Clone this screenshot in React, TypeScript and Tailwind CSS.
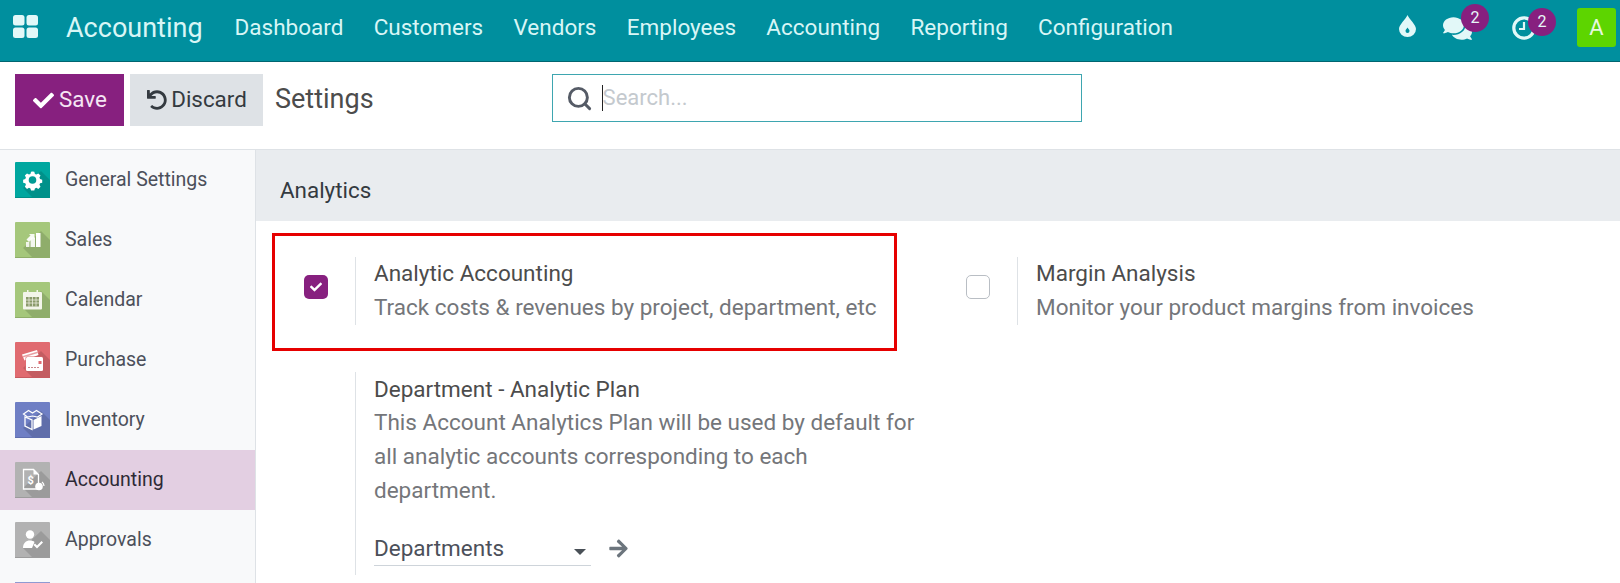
import { Search } from 'lucide-react';
import { FaArrowRight, FaCheck, FaComments, FaUndo } from 'react-icons/fa';

const menu = ['Dashboard', 'Customers', 'Vendors', 'Employees', 'Accounting', 'Reporting', 'Configuration'];

const shadow = 'M8 26 L26 9 L35 18 L35 35 L17 35 Z';

function AppIcon({ name, bg, edge }: { name: string; bg: string; edge: string }) {
  return (
    <svg width="35" height="36" viewBox="0 0 35 36" className="shrink-0">
      <rect width="35" height="36" fill={bg} rx="1" />
      <rect y="35" width="35" height="1" fill={edge} />
      <path d={shadow} fill="#000" opacity="0.13" />
      {name === 'gear' && (
        <g fill="#fff">
          <path d="M17.5 8.5l2 .3.7 2.4 1.6.7 2.2-1.2 2.4 2.4-1.2 2.2.7 1.6 2.4.7v3.4l-2.4.7-.7 1.6 1.2 2.2-2.4 2.4-2.2-1.2-1.6.7-.7 2.4h-3.6l-.7-2.4-1.6-.7-2.2 1.2-2.4-2.4 1.2-2.2-.7-1.6-2.4-.7v-3.4l2.4-.7.7-1.6-1.2-2.2 2.4-2.4 2.2 1.2 1.6-.7.7-2.4z" transform="translate(1.75 1.8) scale(.9)" />
          <circle cx="17.5" cy="18" r="3.8" fill="#009b94" />
        </g>
      )}
      {name === 'sales' && (
        <g fill="#fff">
          <rect x="11" y="20" width="3.4" height="5" opacity=".85" />
          <rect x="15.5" y="15.5" width="4.5" height="9.5" opacity=".9" />
          <rect x="21" y="11" width="4.5" height="14" />
          <path d="M11.5 17.5l4-4-1.5-1.5h5.5v5.5l-1.5-1.5-4 4z" opacity=".9" />
        </g>
      )}
      {name === 'calendar' && (
        <g>
          <rect x="8" y="10" width="19" height="17.5" rx="1" fill="#f3f5ea" />
          <rect x="12" y="8" width="1.5" height="4" fill="#f3f5ea" />
          <rect x="21.5" y="8" width="1.5" height="4" fill="#f3f5ea" />
          <rect x="11" y="15" width="13" height="9.5" fill="#8a9a6a" />
          <path d="M11 18h13M11 21h13M14 15v9.5M17.5 15v9.5M21 15v9.5" stroke="#f3f5ea" strokeWidth=".7" />
        </g>
      )}
      {name === 'purchase' && (
        <g>
          <path d="M7 12.5l15-4.5 1.5 5-14 5.5z" fill="#fff" />
          <path d="M7.7 14l15-4.5.4 1.6-15 4.5z" fill="#e8a0a3" />
          <rect x="10.5" y="14.5" width="17.5" height="14.5" rx="1.5" fill="#e06b70" />
          <rect x="11" y="15" width="17" height="14" rx="1.5" fill="#fff" />
          <rect x="23.5" y="19" width="3" height="3" fill="#e06b70" />
          <path d="M13 25.5h12" stroke="#c9878a" strokeWidth="1" strokeDasharray="2 1" />
        </g>
      )}
      {name === 'inventory' && (
        <g>
          <path d="M8.5 12l5-3.5 4 2.5 4-2.5 5.5 3.5-4.5 3-5-1-5 1z" fill="none" stroke="#fff" strokeWidth="1.2" />
          <path d="M10 15l7 3v9.5l-7-3.5z" fill="none" stroke="#fff" strokeWidth="1.3" />
          <path d="M18.5 18l8-4v10l-8 3.5z" fill="#fff" />
        </g>
      )}
      {name === 'accounting' && (
        <g>
          <path d="M8.5 7.5h10l5 5v14.5h-15z" fill="none" stroke="#fff" strokeWidth="1.3" />
          <path d="M18.5 7.5v5h5z" fill="#fff" />
          <text x="12.5" y="22" fontSize="11" fontWeight="700" fill="#fff" fontFamily="Roboto, sans-serif">$</text>
          <circle cx="24" cy="24.5" r="3.8" fill="#fff" />
          <path d="M27 20a5 5 0 0 1 2 4" fill="none" stroke="#fff" strokeWidth="1.2" />
        </g>
      )}
      {name === 'approvals' && (
        <g fill="#fff">
          <circle cx="15" cy="12.5" r="4.2" />
          <path d="M8 26c0-5 3-7.5 7-7.5 2 0 3.5.5 4.5 1.5l-2.5 6z" />
          <path d="M18.5 23l1.5-1.5 2 2 4.5-4.5 1.5 1.5-6 6z" />
        </g>
      )}
    </svg>
  );
}

const apps = [
  { label: 'General Settings', name: 'gear', bg: '#00a79f', edge: '#008f88' },
  { label: 'Sales', name: 'sales', bg: '#a5c77b', edge: '#8fae68' },
  { label: 'Calendar', name: 'calendar', bg: '#a5c77b', edge: '#8fae68' },
  { label: 'Purchase', name: 'purchase', bg: '#e06b70', edge: '#c75a5f' },
  { label: 'Inventory', name: 'inventory', bg: '#6f7fc4', edge: '#5f6eae' },
  { label: 'Accounting', name: 'accounting', bg: '#b2b2b2', edge: '#9c9c9c', active: true },
  { label: 'Approvals', name: 'approvals', bg: '#b2b2b2', edge: '#9c9c9c' },
];

function Badge({ className }: { className: string }) {
  return (
    <span className={`absolute w-[28px] h-[28px] rounded-full bg-[#87207f] text-[#e8f8f8] text-[16px] flex items-center justify-center ${className}`}>
      2
    </span>
  );
}

export default function App() {
  return (
    <div className="relative h-[583px] overflow-hidden bg-white font-['Roboto',sans-serif] text-[#4c4c4c]">
      {/* top bar */}
      <div className="h-[62px] bg-[#008f9e] border-b border-[#006570] flex items-center text-[#d8f6f6]">
        <svg width="25" height="23" viewBox="0 0 25 23" className="ml-[13px] -mt-[9px] shrink-0" fill="#e2f8f8">
          <rect x="0" y="0" width="11.5" height="10.5" rx="2.5" />
          <rect x="13.5" y="0" width="11.5" height="10.5" rx="2.5" />
          <rect x="0" y="12.5" width="11.5" height="10.5" rx="2.5" />
          <rect x="13.5" y="12.5" width="11.5" height="10.5" rx="2.5" />
        </svg>
        <span className="ml-[28px] text-[27px] -mt-[4px]">Accounting</span>
        <div className="ml-[32px] flex gap-[30.3px] text-[22.5px] -mt-[6px]">
          {menu.map((m) => (
            <span key={m}>{m}</span>
          ))}
        </div>
        <div className="ml-auto flex items-center -mt-[6px]">
          <svg width="17" height="22" viewBox="0 0 17 22" className="-mt-[4px]">
            <path d="M8.5 0C10 4 17 9.5 17 14a8.5 8 0 0 1-17 0C0 9.5 7 4 8.5 0z" fill="#e2f8f8" />
            <path d="M8.5 12.5c.8 1.4 2 2.2 2 3.5a2 2 0 0 1-4 0c0-1.3 1.2-2.1 2-3.5z" fill="#008f9e" />
          </svg>
          <div className="relative ml-[27px] mt-[1px]">
            <FaComments className="text-[#e2f8f8]" size={29} />
            <Badge className="-top-[10px] -right-[17px]" />
          </div>
          <div className="relative ml-[40px]">
            <svg width="24" height="24" viewBox="0 0 24 24" fill="none" stroke="#e2f8f8" strokeWidth="3.2">
              <circle cx="12" cy="12" r="10.2" />
              <path d="M12 6v7H7" strokeWidth="2.2" />
            </svg>
            <Badge className="-top-[8px] -right-[20px]" />
          </div>
          <div className="ml-[41px] mr-[4px] w-[39px] h-[39px] rounded-[3px] bg-[#5dd500] text-[#e8f8e0] text-[22px] flex items-center justify-center">
            A
          </div>
        </div>
      </div>

      {/* control panel */}
      <div className="h-[88px] border-b border-[#dee2e6] flex items-start pt-[12px] pl-[15px]">
        <button className="w-[109px] h-[52px] pl-[1px] bg-[#87207f] text-[#f5e6f4] text-[22.4px] flex items-center justify-center gap-[5px]">
          <FaCheck size={21} className="text-white" />
          Save
        </button>
        <button className="ml-[6px] w-[133px] h-[52px] pl-[1px] bg-[#dee2e6] text-[#343a40] text-[22.4px] flex items-center justify-center gap-[4px]">
          <FaUndo size={20} />
          Discard
        </button>
        <span className="ml-[12px] mt-[5px] text-[27px] text-[#4c4c4c]">Settings</span>
        <div className="ml-[178px] w-[530px] h-[48px] border border-[#3ea6b0] flex items-center pl-[13px] text-[#495057]">
          <Search size={27} strokeWidth={2.6} className="text-[#555b66]" />
          <span className="ml-[9px] w-px h-[26px] bg-[#222]" />
          <span className="text-[22px] -mt-[2px] text-[#c4c9ce]">Search...</span>
        </div>
      </div>

      <div className="flex">
        {/* settings apps */}
        <div className="w-[256px] h-[434px] shrink-0 bg-[#f8f9fa] border-r border-[#dee2e6]">
          {apps.map((a) => (
            <div
              key={a.label}
              className={a.active ? 'h-[60px] flex items-center pl-[15px] bg-[#e3cfe2] text-[#2e2a36]' : 'h-[60px] flex items-center pl-[15px] text-[#4c505a]'}
            >
              <AppIcon name={a.name} bg={a.bg} edge={a.edge} />
              <span className="ml-[15px] text-[19.5px]">{a.label}</span>
            </div>
          ))}
          <div className="ml-[15px] mt-[12px] w-[35px] h-[2px] bg-[#8f9ad2]" />
        </div>

        {/* settings content */}
        <div className="flex-1 min-w-0">
          <div className="h-[71px] bg-[#e9ecef] flex items-center pl-[24px] pt-[10px] text-[22.4px] text-[#343a40]">Analytics</div>

          <div className="flex pt-[36px]">
            <div className="w-[661px] shrink-0 flex">
              <div className="w-[100px] shrink-0 flex justify-end pr-[27px] pt-[18px] border-r border-[#dee2e6] h-[68px]">
                <span className="w-[24px] h-[24px] rounded-[5px] bg-[#87207f] flex items-center justify-center">
                  <FaCheck size={12} className="text-white" />
                </span>
              </div>
              <div className="pl-[18px] -mt-[1px]">
                <div className="text-[22.5px] leading-[34px] text-[#4c4c4c]">Analytic Accounting</div>
                <div className="text-[22.5px] leading-[34px] text-[#74767a]">Track costs &amp; revenues by project, department, etc</div>
              </div>
            </div>
            <div className="flex">
              <div className="w-[101px] shrink-0 flex justify-end pr-[27px] pt-[18px] border-r border-[#dee2e6] h-[68px]">
                <span className="w-[24px] h-[24px] rounded-[5px] bg-white border border-[#b9bec4]" />
              </div>
              <div className="pl-[18px] -mt-[1px]">
                <div className="text-[22.5px] leading-[34px] text-[#4c4c4c]">Margin Analysis</div>
                <div className="text-[22.5px] leading-[34px] text-[#74767a]">Monitor your product margins from invoices</div>
              </div>
            </div>
          </div>

          <div className="ml-[99px] mt-[47px] border-l border-[#dee2e6] pl-[18px] w-[562px] h-[203px]">
            <div className="text-[22.5px] leading-[34px] text-[#4c4c4c] mt-[1px]">Department - Analytic Plan</div>
            <div className="text-[22.5px] leading-[34px] -mt-[1px] text-[#74767a]">
              This Account Analytics Plan will be used by default for all analytic accounts corresponding to each department.
            </div>
            <div className="mt-[25px] flex items-center">
              <div className="w-[217px] h-[34px] border-b border-[#ced4da] flex items-center justify-between text-[22.5px] text-[#4c505a] pr-[5px]">
                Departments
                <span className="mt-[6px] w-0 h-0 border-l-[6px] border-r-[6px] border-t-[6px] border-l-transparent border-r-transparent border-t-[#495057]" />
              </div>
              <FaArrowRight size={21} className="ml-[17px] -mt-[2px] text-[#6c757d]" />
            </div>
          </div>
        </div>
      </div>

      {/* annotation */}
      <div className="absolute left-[272px] top-[233px] w-[625px] h-[118px] border-[3px] border-[#e60000] pointer-events-none" />
    </div>
  );
}
